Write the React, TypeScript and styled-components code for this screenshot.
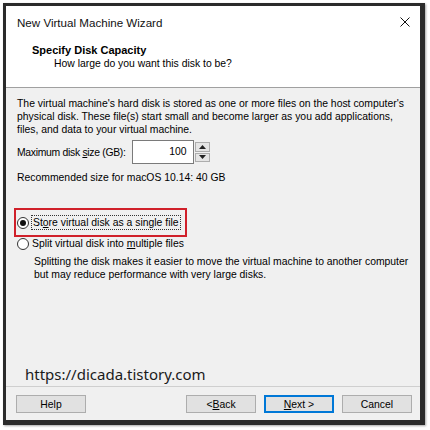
import styled, { createGlobalStyle } from 'styled-components';

const Global = createGlobalStyle`
  html, body {
    margin: 0;
    padding: 0;
    background: #ffffff;
  }
  body {
    font-family: 'Liberation Sans', Arial, sans-serif;
    font-size: 10.4px;
    color: #000;
  }
`;

const App = () => {
  return (
    <>
      <Global />
      <Page>
        <Frame>
          <TitleBar>
            <Title>New Virtual Machine Wizard</Title>
            <CloseIcon viewBox="0 0 10 10">
              <path d="M0.5 0.5 L9.5 9.5 M9.5 0.5 L0.5 9.5" stroke="#111" strokeWidth="1" />
            </CloseIcon>
          </TitleBar>
          <Header>
            <HeaderTitle>Specify Disk Capacity</HeaderTitle>
            <HeaderSub>How large do you want this disk to be?</HeaderSub>
          </Header>
          <Body>
            <Para>
              The virtual machine's hard disk is stored as one or more files on the host computer's
              <br />
              physical disk. These file(s) start small and become larger as you add applications,
              <br />
              files, and data to your virtual machine.
            </Para>
            <SizeRow>
              <SizeLabel>
                Maximum disk <u>s</u>ize (GB):
              </SizeLabel>
              <Spin>
                <SpinInput>100</SpinInput>
                <SpinButtons>
                  <SpinBtn>
                    <svg width="7" height="4" viewBox="0 0 7 4">
                      <path d="M0 4 L3.5 0 L7 4 Z" fill="#222" />
                    </svg>
                  </SpinBtn>
                  <SpinBtn>
                    <svg width="7" height="4" viewBox="0 0 7 4">
                      <path d="M0 0 L3.5 4 L7 0 Z" fill="#222" />
                    </svg>
                  </SpinBtn>
                </SpinButtons>
              </Spin>
            </SizeRow>
            <Para>Recommended size for macOS 10.14: 40 GB</Para>
            <Options>
              <Highlight>
                <Radio checked />
                <Focused>
                  St<u>o</u>re virtual disk as a single file
                </Focused>
              </Highlight>
              <OptionRow>
                <Radio />
                <span>
                  Split virtual disk into <u>m</u>ultiple files
                </span>
              </OptionRow>
              <Note>
                Splitting the disk makes it easier to move the virtual machine to another computer
                <br />
                but may reduce performance with very large disks.
              </Note>
            </Options>
            <Watermark>https://dicada.tistory.com</Watermark>
          </Body>
          <Footer>
            <Button>Help</Button>
            <Spacer />
            <Button>
              &lt; <u>B</u>ack
            </Button>
            <Button primary>
              <u>N</u>ext &gt;
            </Button>
            <Button>Cancel</Button>
          </Footer>
        </Frame>
      </Page>
    </>
  );
};

const Page = styled.div`
  width: 430px;
  height: 430px;
  padding: 3px 0 0 3px;
  box-sizing: border-box;
  background: #fff;
`;

const Frame = styled.div`
  width: 422px;
  height: 422px;
  box-sizing: border-box;
  border: 3px solid #2b2b2b;
  border-right-width: 5px;
  border-bottom-width: 5px;
  box-shadow: 1px 1px 2px rgba(0, 0, 0, 0.35);
  background: #f0f0f0;
  display: flex;
  flex-direction: column;
  overflow: hidden;
`;

const TitleBar = styled.div`
  height: 32px;
  background: #fff;
  display: flex;
  align-items: center;
  justify-content: space-between;
  padding: 0 10px 0 11px;
  flex-shrink: 0;
`;

const Title = styled.div`
  font-size: 11.6px;
  color: #111;
`;

const CloseIcon = styled.svg`
  width: 10px;
  height: 10px;
`;

const Header = styled.div`
  background: #fff;
  height: 50px;
  padding: 5px 0 0 26px;
  box-sizing: border-box;
  border-bottom: 1px solid #a0a0a0;
  flex-shrink: 0;
`;

const HeaderTitle = styled.div`
  font-weight: bold;
  font-size: 11px;
  line-height: 14px;
`;

const HeaderSub = styled.div`
  padding-left: 22px;
  line-height: 14px;
`;

const Body = styled.div`
  flex: 1;
  padding: 9px 10px 0 11px;
  display: flex;
  flex-direction: column;
  border-bottom: 1px solid #cfcfcf;
`;

const Para = styled.div`
  line-height: 13px;
  white-space: nowrap;
`;

const SizeRow = styled.div`
  display: flex;
  align-items: center;
  gap: 6px;
  margin: 4px 0 7px;
`;

const SizeLabel = styled.span`
  letter-spacing: -0.3px;
`;

const Spin = styled.div`
  display: flex;
  height: 24px;
`;

const SpinInput = styled.div`
  width: 62px;
  box-sizing: border-box;
  border: 1px solid #7a7a7a;
  background: #fff;
  text-align: right;
  padding: 5px 6px 0 0;
`;

const SpinButtons = styled.div`
  display: flex;
  flex-direction: column;
  gap: 1px;
  padding: 2px 0 2px 1px;
  width: 15px;
`;

const SpinBtn = styled.div`
  flex: 1;
  border: 1px solid #adadad;
  background: #e5e5e5;
  display: flex;
  align-items: center;
  justify-content: center;
`;

const Options = styled.div`
  margin-top: 24px;
  display: flex;
  flex-direction: column;
`;

const Highlight = styled.div`
  align-self: flex-start;
  display: flex;
  align-items: center;
  gap: 3px;
  border: 2px solid #d0202a;
  padding: 6px 5px 6px 1px;
  margin-left: -3px;
`;

const Focused = styled.span`
  outline: 1px dotted #333;
  line-height: 13px;
  padding: 0 1px;
`;

const OptionRow = styled.div`
  display: flex;
  align-items: center;
  gap: 3px;
  line-height: 13px;
`;

const Radio = styled.span<{ checked?: boolean }>`
  width: 12px;
  height: 12px;
  flex-shrink: 0;
  border-radius: 50%;
  border: 1px solid #333;
  background: #fff;
  box-sizing: border-box;
  display: inline-flex;
  align-items: center;
  justify-content: center;
  &::after {
    content: '';
    width: 6px;
    height: 6px;
    border-radius: 50%;
    background: ${(p) => (p.checked ? '#111' : 'transparent')};
  }
`;

const Note = styled.div`
  padding-left: 17px;
  margin-top: 6px;
  line-height: 12.5px;
  white-space: nowrap;
`;

const Watermark = styled.div`
  margin-top: auto;
  margin-bottom: 2px;
  padding-left: 8px;
  font-family: 'Noto Sans', 'DejaVu Sans', sans-serif;
  font-size: 15px;
  color: #1a1a1a;
`;

const Footer = styled.div`
  height: 33px;
  flex-shrink: 0;
  display: flex;
  align-items: center;
  gap: 8px;
  padding: 1px 8px 0 10px;
  box-sizing: border-box;
`;

const Spacer = styled.div`
  flex: 1;
`;

const Button = styled.div<{ primary?: boolean }>`
  width: 70px;
  height: 18px;
  box-sizing: border-box;
  display: flex;
  align-items: center;
  justify-content: center;
  background: #e1e1e1;
  border: ${(p) => (p.primary ? '2px solid #0078d7' : '1px solid #adadad')};
`;

export default App;
